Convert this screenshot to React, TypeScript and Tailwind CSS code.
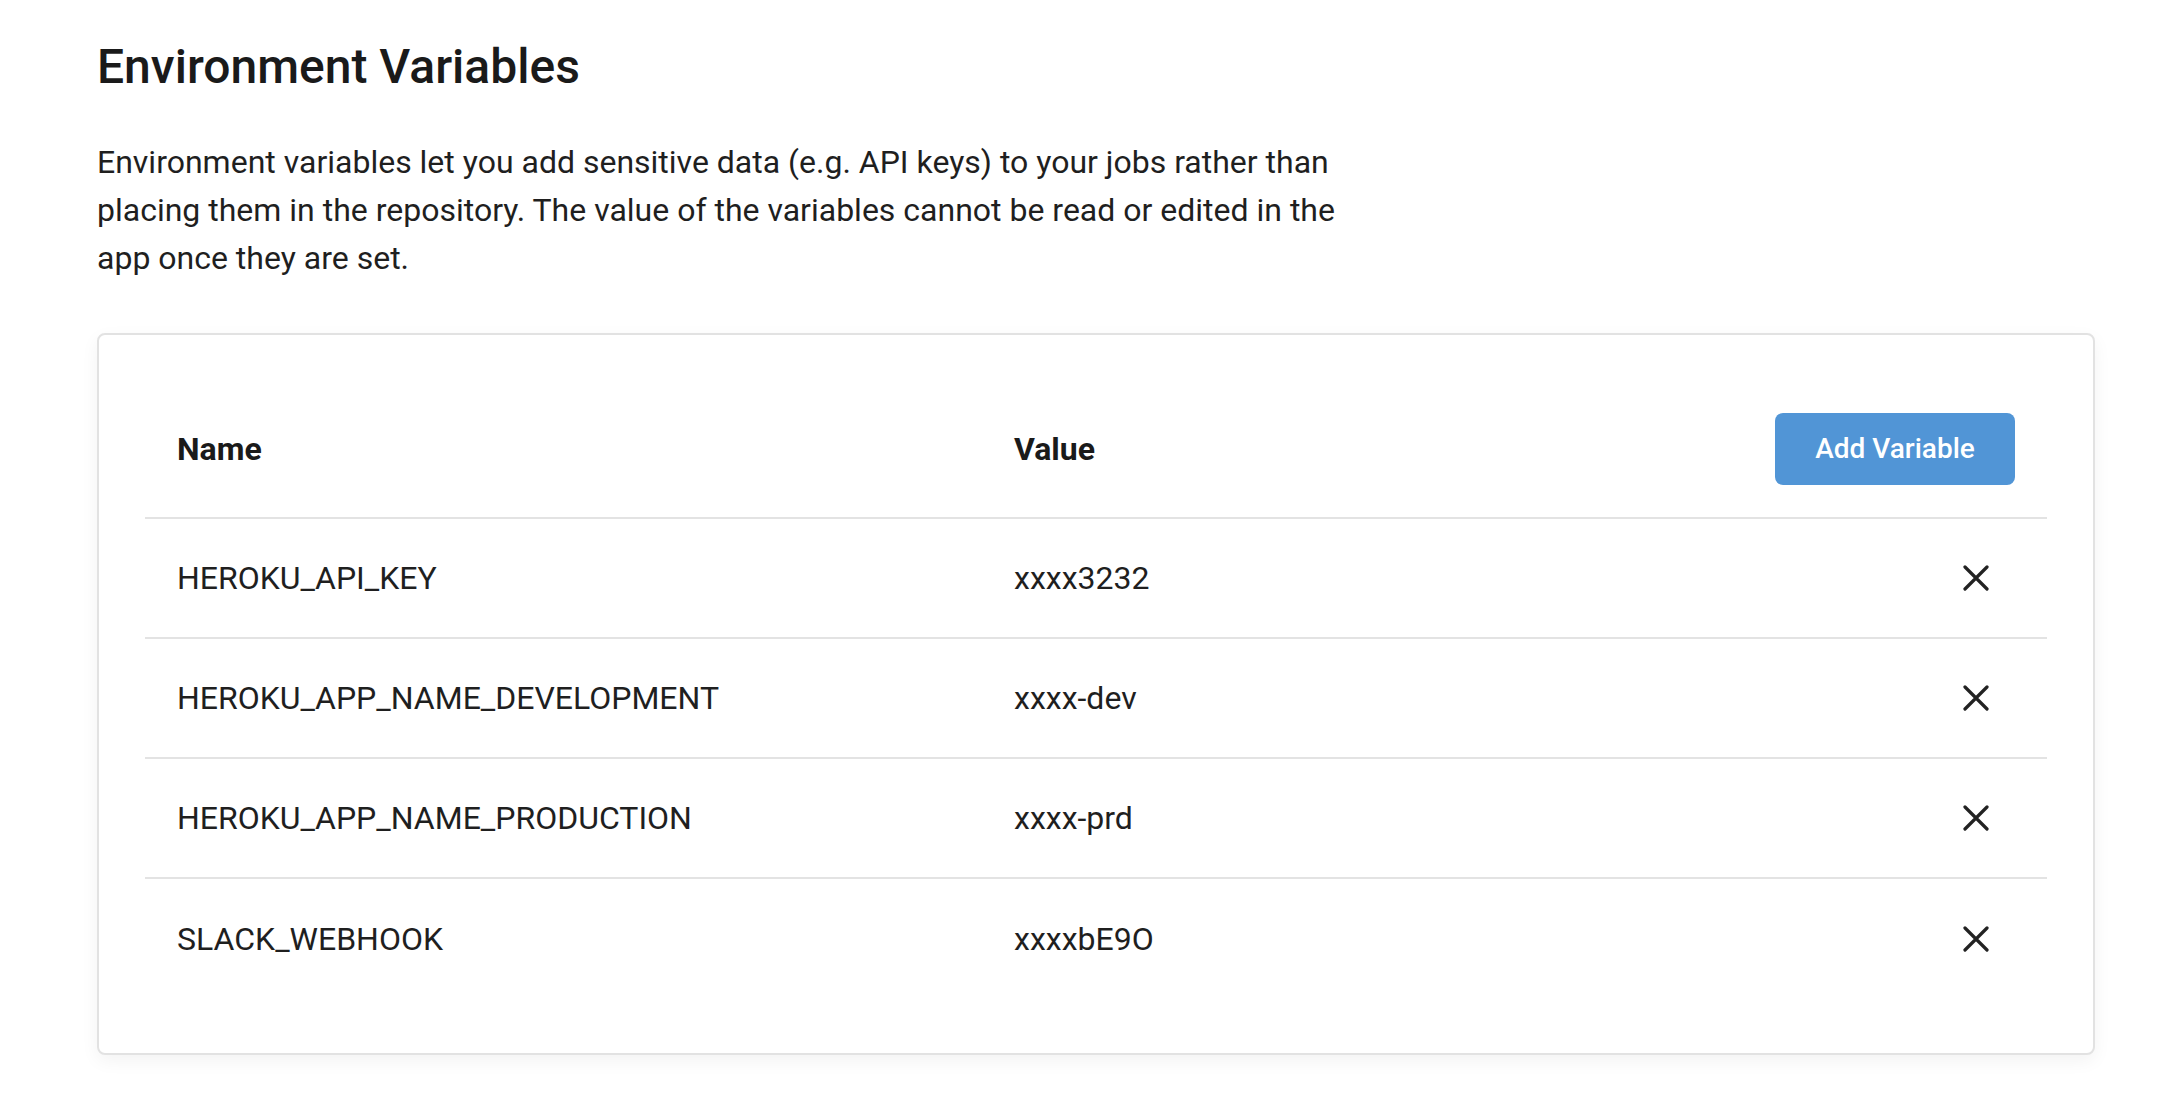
const variables = [
  { name: "HEROKU_API_KEY", value: "xxxx3232" },
  { name: "HEROKU_APP_NAME_DEVELOPMENT", value: "xxxx-dev" },
  { name: "HEROKU_APP_NAME_PRODUCTION", value: "xxxx-prd" },
  { name: "SLACK_WEBHOOK", value: "xxxxbE9O" },
];

function CloseIcon() {
  return (
    <svg width="26" height="26" viewBox="0 0 26 26" fill="none">
      <path
        d="M2 2L24 24M24 2L2 24"
        stroke="#222222"
        strokeWidth="3.2"
        strokeLinecap="round"
      />
    </svg>
  );
}

export default function App() {
  return (
    <main
      className="min-h-screen bg-white pl-[97px] pr-[75px] pt-[38px] text-[#1f1f1f]"
      style={{ fontFamily: "Roboto, 'Liberation Sans', sans-serif" }}
    >
      <h1 className="text-[48px] leading-[58px] font-medium text-[#1a1a1a]">
        Environment Variables
      </h1>
      <p className="mt-[42px] w-[1260px] text-[32px] leading-[48px] text-[#1f1f1f]">
        Environment variables let you add sensitive data (e.g. API keys) to your
        jobs rather than placing them in the repository. The value of the
        variables cannot be read or edited in the app once they are set.
      </p>

      <div className="mt-[51px] rounded-[8px] border-2 border-[#e2e2e2] bg-white px-[46px] pt-[46px] pb-[54px] shadow-[0_6px_18px_rgba(0,0,0,0.05)]">
        <div className="flex h-[138px] items-center border-b-2 border-[#e3e3e3]">
          <div className="w-[837px] pl-[32px] text-[32px] font-bold text-[#1a1a1a]">
            Name
          </div>
          <div className="flex-1 pl-[32px] text-[32px] font-bold text-[#1a1a1a]">
            Value
          </div>
          <div className="pr-[32px]">
            <button className="h-[72px] w-[240px] rounded-[8px] bg-[#5195d6] text-[28px] font-medium text-white">
              Add Variable
            </button>
          </div>
        </div>

        {variables.map((v, index) => (
          <div
            key={v.name}
            className={`flex h-[120px] items-center ${
              index < variables.length - 1 ? "border-b-2 border-[#e3e3e3]" : ""
            }`}
          >
            <div className="w-[837px] pl-[32px] text-[32px] text-[#1f1f1f]">
              {v.name}
            </div>
            <div className="flex-1 pl-[32px] text-[32px] text-[#1f1f1f]">
              {v.value}
            </div>
            <div className="pr-[58px]">
              <CloseIcon />
            </div>
          </div>
        ))}
      </div>
    </main>
  );
}
